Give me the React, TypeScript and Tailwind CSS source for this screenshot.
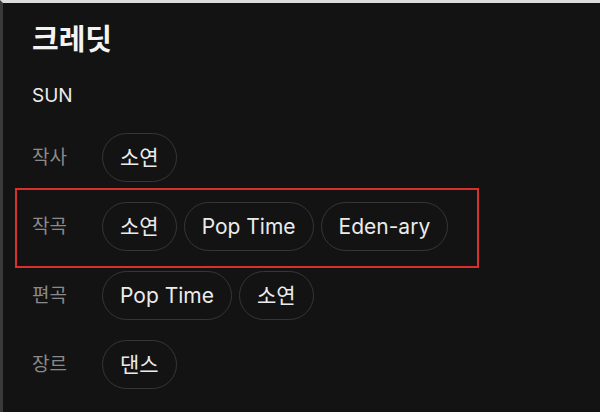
import React from "react";

const FONT = 'Inter, "Noto Sans CJK KR", "Noto Sans", sans-serif';

function Chip({ children }: { children: React.ReactNode }) {
  return (
    <div className="h-[49px] px-[17px] flex items-center rounded-full border border-[#363636] text-[21px] text-[#ebebeb] leading-none whitespace-nowrap">
      {children}
    </div>
  );
}

function Row({
  label,
  items,
  highlight,
}: {
  label: string;
  items: string[];
  highlight?: boolean;
}) {
  return (
    <div className="relative flex items-center">
      <div className="w-[70px] text-[19px] text-[#8a8a8a] leading-none">{label}</div>
      <div className="flex items-center gap-[7px]">
        {items.map((it, i) => (
          <Chip key={i}>{it}</Chip>
        ))}
      </div>
      {highlight && (
        <div className="absolute left-[-17px] top-[-14px] bottom-[-17px] w-[464px] border-2 border-[#d8302a]" />
      )}
    </div>
  );
}

export default function App() {
  return (
    <div
      className="w-[600px] h-[412px] overflow-hidden bg-[#131313] border-t-[3px] border-l-[3px] border-t-[#dcdcdc] border-l-[#3a3a3a] pl-[29px] pt-[19px]"
      style={{ fontFamily: FONT }}
    >
      <div className="text-[29px] leading-[36px] font-bold text-[#f3f3f3]">크레딧</div>
      <div className="mt-[26px] text-[19px] leading-[24px] text-[#ececec]">SUN</div>
      <div className="mt-[25px] flex flex-col gap-[20px]">
        <Row label="작사" items={["소연"]} />
        <Row label="작곡" items={["소연", "Pop Time", "Eden-ary"]} highlight />
        <Row label="편곡" items={["Pop Time", "소연"]} />
        <Row label="장르" items={["댄스"]} />
      </div>
    </div>
  );
}
